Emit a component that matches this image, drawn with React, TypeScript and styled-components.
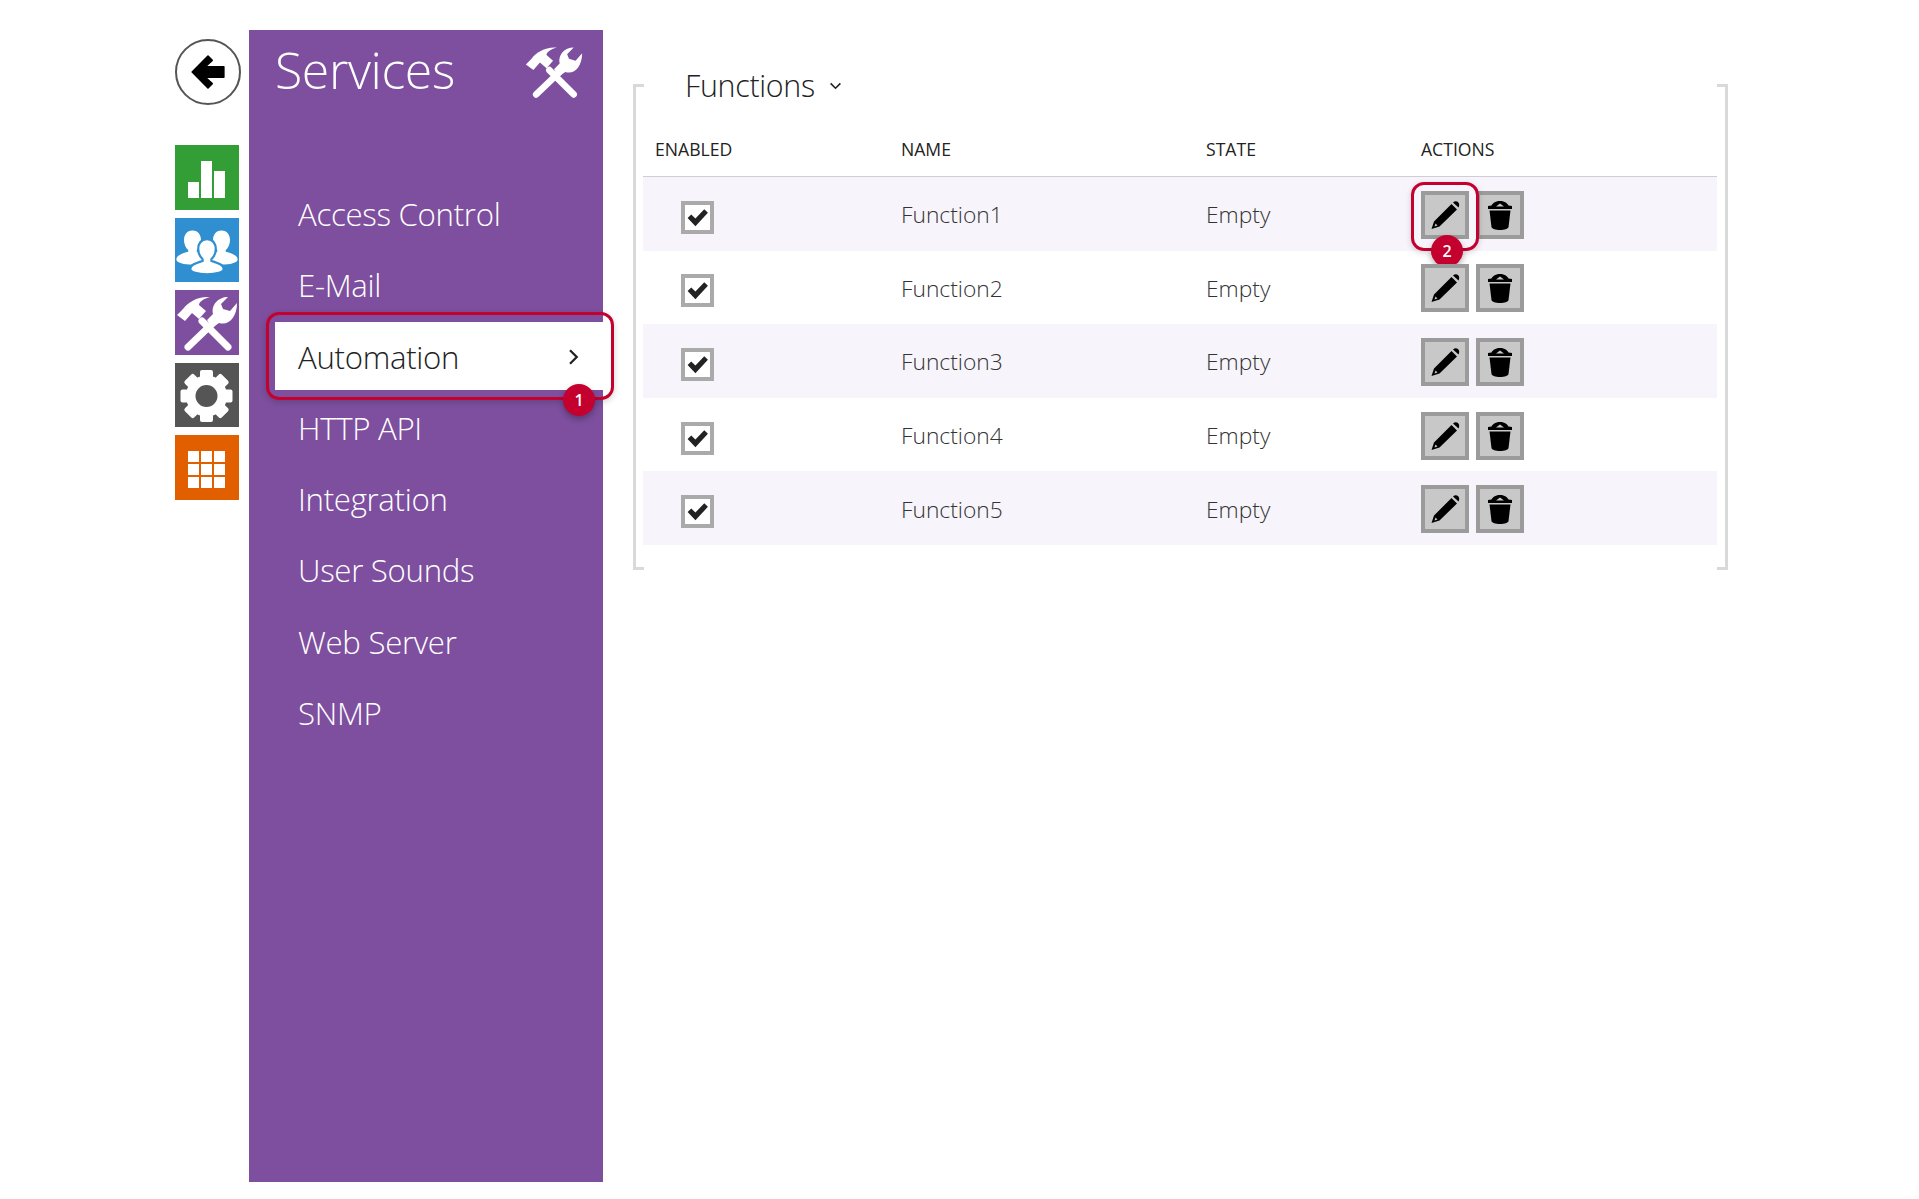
import React from 'react';
import styled, { createGlobalStyle } from 'styled-components';

const GlobalStyle = createGlobalStyle`
  html, body {
    margin: 0;
    padding: 0;
    background: #fff;
    font-family: "Open Sans", "Noto Sans", sans-serif;
    color: #333;
  }
`;

const RED = '#c4002f';

const Page = styled.div`
  display: flex;
  align-items: flex-start;
  height: 1199px;
  box-sizing: border-box;
  padding: 30px 0 0 175px;
  overflow: hidden;
`;

const Rail = styled.div`
  display: flex;
  flex-direction: column;
  width: 66px;
  margin-right: 8px;
`;

const BackButton = styled.button`
  width: 66px;
  height: 66px;
  margin: 9px 0 40px;
  padding: 0;
  border: 2.5px solid #555;
  border-radius: 50%;
  background: #fff;
  display: flex;
  align-items: center;
  justify-content: center;
`;

const Tiles = styled.div`
  display: flex;
  flex-direction: column;
  gap: 8px;
`;

const Tile = styled.div<{ $color: string }>`
  width: 64px;
  height: 64.5px;
  background: ${(p) => p.$color};
  display: flex;
  align-items: center;
  justify-content: center;
  svg {
    display: block;
  }
`;

const Panel = styled.aside`
  width: 354px;
  height: 1152px;
  flex: none;
  background: #7d4f9e;
  color: #fff;
`;

const PanelHeader = styled.header`
  display: flex;
  align-items: flex-start;
  justify-content: space-between;
  height: 149px;
  box-sizing: border-box;
  padding: 8px 19px 0 26px;
`;

const PanelTitle = styled.h1`
  margin: 0;
  font-size: 50px;
  line-height: 64px;
  font-weight: 300;
  letter-spacing: -0.4px;
`;

const HeaderIcon = styled.div`
  margin-top: 3px;
`;

const Nav = styled.nav`
  display: flex;
  flex-direction: column;
  gap: 3.3px;
`;

const NavItem = styled.a<{ $active?: boolean }>`
  position: relative;
  display: flex;
  align-items: center;
  justify-content: space-between;
  height: 68px;
  box-sizing: border-box;
  margin-left: 26px;
  padding: 2px 21px 0 23px;
  font-size: 31.2px;
  font-weight: 300;
  letter-spacing: -0.3px;
  color: ${(p) => (p.$active ? '#222' : '#fff')};
  background: ${(p) => (p.$active ? '#fff' : 'transparent')};
`;

const NavOutline = styled.span`
  position: absolute;
  top: -10px;
  left: -9px;
  right: -11px;
  bottom: -10px;
  border: 3px solid ${RED};
  border-radius: 13px;
  box-shadow: 0 2px 6px rgba(0, 0, 0, 0.18);
`;

const ActionOutline = styled.span`
  position: absolute;
  top: -9px;
  left: -10px;
  width: 68px;
  height: 69px;
  box-sizing: border-box;
  border: 3px solid ${RED};
  border-radius: 13px;
  box-shadow: 0 2px 6px rgba(0, 0, 0, 0.16);
`;

const Marker = styled.span<{ $right: number; $bottom: number }>`
  position: absolute;
  right: ${(p) => p.$right}px;
  bottom: ${(p) => p.$bottom}px;
  width: 32px;
  height: 32px;
  border-radius: 50%;
  background: ${RED};
  color: #fff;
  font-size: 16px;
  font-weight: 600;
  display: flex;
  align-items: center;
  justify-content: center;
  box-shadow: 0 3px 6px rgba(0, 0, 0, 0.3);
`;

const Section = styled.section`
  position: relative;
  flex: none;
  width: 1095px;
  height: 486px;
  margin: 54px 0 0 30px;
  box-sizing: border-box;
  padding: 0 11px 0 10px;

  &::before,
  &::after {
    content: '';
    position: absolute;
    top: 0;
    bottom: 0;
    width: 8px;
    border: 3px solid #d9d9d9;
  }
  &::before {
    left: 0;
    border-right: 0;
  }
  &::after {
    right: 0;
    border-left: 0;
  }
`;

const SectionTitle = styled.h2`
  display: flex;
  align-items: center;
  gap: 14px;
  height: 44px;
  margin: -21px 0 1px;
  padding-left: 42px;
  font-size: 30.4px;
  font-weight: 300;
  letter-spacing: -0.3px;
  color: #222;
`;

const HeadRow = styled.div`
  display: grid;
  grid-template-columns: 246px 305px 215px 1fr;
  align-items: end;
  height: 69px;
  box-sizing: border-box;
  padding: 0 0 15px 12px;
  border-bottom: 1px solid #cfced6;
  font-size: 17.6px;
  line-height: 24px;
  color: #222;
`;

const Row = styled.div`
  display: grid;
  grid-template-columns: 246px 305px 215px 1fr;
  align-items: center;
  height: 73.6px;
  padding-left: 12px;
  font-size: 22.8px;
  font-weight: 300;
  color: #333;
  &:nth-of-type(odd) {
    background: #f7f5fb;
  }
`;

const Cell = styled.span`
  margin-top: 2px;
`;

const CheckBox = styled.span`
  width: 33px;
  height: 33px;
  box-sizing: border-box;
  margin: 7px 0 0 26px;
  border: 4px solid #aaa;
  background: #fff;
  display: flex;
  align-items: center;
  justify-content: center;
`;

const Actions = styled.div`
  display: flex;
  gap: 7px;
  margin-top: 2px;
`;

const ActionCell = styled.div`
  position: relative;
`;

const IconButton = styled.button`
  width: 48px;
  height: 48px;
  padding: 0;
  box-sizing: border-box;
  border: 4px solid #9b9b9b;
  background: #c8c8c8;
  display: flex;
  align-items: center;
  justify-content: center;
`;

const ToolsIcon = ({ size = 64 }: { size?: number }) => (
  <svg width={size} height={size} viewBox="0 0 64 64" fill="#fff">
    <path d="M2 25 L8 19 C13 12 23 6 35 7 C28 9 24 12 24 15 L31 21 L24 29 L17 23 L10 31 Z" />
    <path d="M27 31 L53 57" stroke="#fff" strokeWidth="7" strokeLinecap="round" />
    <path d="M13 57 L37 34" stroke="#fff" strokeWidth="7" strokeLinecap="round" />
    <path d="M37 38 L44 33 C54 36 62 27 62 13 L55 21 L48 19 L46 14 L53 7 C43 7 36 15 38 24 L32 30 Z" />
  </svg>
);

const ChartIcon = () => (
  <svg width="64" height="64" viewBox="0 0 64 64" fill="#fff">
    <rect x="13" y="37" width="11" height="16" />
    <rect x="26" y="16" width="11" height="37" />
    <rect x="39" y="26" width="11" height="27" />
  </svg>
);

const Person = ({ x, y, s }: { x: number; y: number; s: number }) => (
  <path
    transform={`translate(${x} ${y}) scale(${s})`}
    d="M0 -17 C-7 -17 -10 -11 -10 -6 C-10 -1 -8 3 -5 6 L-5 8 C-12 10 -19 12 -19 17 C-19 21 -10 23 0 23 C10 23 19 21 19 17 C19 12 12 10 5 8 L5 6 C8 3 10 -1 10 -6 C10 -11 7 -17 0 -17 Z"
  />
);

const UsersIcon = () => (
  <svg width="64" height="64" viewBox="0 0 64 64" fill="#fff">
    <Person x={17.5} y={27} s={0.85} />
    <Person x={46.5} y={27} s={0.85} />
    <g stroke="#2f8fd0" strokeWidth="2.5">
      <Person x={32} y={36} s={0.88} />
    </g>
  </svg>
);

const GearIcon = () => (
  <svg width="64" height="64" viewBox="0 0 64 64">
    <g transform="translate(-0.5 1)">
      {[0, 45, 90, 135, 180, 225, 270, 315].map((a) => (
        <rect key={a} x="25.5" y="6" width="13" height="12" rx="2" fill="#fff" transform={`rotate(${a} 32 32)`} />
      ))}
      <circle cx="32" cy="32" r="15.75" fill="none" stroke="#fff" strokeWidth="9.5" />
    </g>
  </svg>
);

const GridIcon = () => (
  <svg width="64" height="64" viewBox="0 0 64 64" fill="#fff">
    {[13, 26, 39].map((x) =>
      [16, 29, 42].map((y) => <rect key={`${x}-${y}`} x={x} y={y} width="11" height="11" />),
    )}
  </svg>
);

const BackIcon = () => (
  <svg width="38" height="38" viewBox="0 0 36 36">
    <path d="M18 3 L3 18 L18 33 L22 29 L15.5 23 L33 23 L33 13 L15.5 13 L22 7 Z" stroke="#000" strokeWidth="1.5" strokeLinejoin="round" />
  </svg>
);

const Chevron = ({ dir, size }: { dir: 'right' | 'down'; size: number }) => (
  <svg width={size} height={size} viewBox="0 0 12 12" fill="none" stroke="#222" strokeWidth="1.5">
    <path d={dir === 'right' ? 'M4 1.5 L8.5 6 L4 10.5' : 'M1.5 4 L6 8.5 L10.5 4'} />
  </svg>
);

const CheckIcon = () => (
  <svg width="27" height="27" viewBox="0 0 24 24">
    <path d="M2.5 12.5 L6 9 L10 13 L18.5 4 L22 7.5 L10 20.5 Z" fill="#222" />
  </svg>
);

const PencilIcon = () => (
  <svg width="34" height="34" viewBox="0 0 34 34" fill="#000">
    <path d="M3.5 31 L6 23.5 L23.5 6 L29 11.5 L11.5 28.5 Z M7.5 25.5 L6.5 28.5 L9.5 27.5 Z" fillRule="evenodd" />
    <path d="M25 4.5 C26.5 3 28.5 2.8 30 4 C31.5 5.5 31.5 7.5 30.5 9.5 Z" />
  </svg>
);

const TrashIcon = () => (
  <svg width="30" height="34" viewBox="0 0 30 34" fill="#000">
    <path d="M15 3 C10 3 7.5 5.5 6.5 7.5 L3 8 L3 11 L27 11 L27 8 L23.5 7.5 C22.5 5.5 20 3 15 3 Z M15 5.5 L19 8.5 L11 8.5 Z" fillRule="evenodd" />
    <path d="M4.5 12.5 L25.5 12.5 L23.5 29 C23 31 19.5 32 15 32 C10.5 32 7 31 6.5 29 Z" />
  </svg>
);

const navItems = ['Access Control', 'E-Mail', 'Automation', 'HTTP API', 'Integration', 'User Sounds', 'Web Server', 'SNMP'];
const functions = ['Function1', 'Function2', 'Function3', 'Function4', 'Function5'];

export default function App() {
  return (
    <Page>
      <GlobalStyle />
      <Rail>
        <BackButton>
          <BackIcon />
        </BackButton>
        <Tiles>
          <Tile $color="#339e35"><ChartIcon /></Tile>
          <Tile $color="#2f8fd0"><UsersIcon /></Tile>
          <Tile $color="#7d4f9e"><ToolsIcon /></Tile>
          <Tile $color="#555555"><GearIcon /></Tile>
          <Tile $color="#e25f00"><GridIcon /></Tile>
        </Tiles>
      </Rail>
      <Panel>
        <PanelHeader>
          <PanelTitle>Services</PanelTitle>
          <HeaderIcon><ToolsIcon size={60} /></HeaderIcon>
        </PanelHeader>
        <Nav>
          {navItems.map((item) => (
            <NavItem key={item} $active={item === 'Automation'}>
              {item}
              {item === 'Automation' && (
                <>
                  <Chevron dir="right" size={18} />
                  <NavOutline />
                  <Marker $right={8} $bottom={-26}>1</Marker>
                </>
              )}
            </NavItem>
          ))}
        </Nav>
      </Panel>
      <Section>
        <SectionTitle>
          Functions
          <Chevron dir="down" size={13} />
        </SectionTitle>
        <HeadRow>
          <span>ENABLED</span>
          <span>NAME</span>
          <span>STATE</span>
          <span>ACTIONS</span>
        </HeadRow>
        <div>
          {functions.map((name, i) => (
            <Row key={name}>
              <CheckBox><CheckIcon /></CheckBox>
              <Cell>{name}</Cell>
              <Cell>Empty</Cell>
              <Actions>
                <ActionCell>
                  <IconButton><PencilIcon /></IconButton>
                  {i === 0 && (
                    <>
                      <ActionOutline />
                      <Marker $right={6} $bottom={-28}>2</Marker>
                    </>
                  )}
                </ActionCell>
                <IconButton><TrashIcon /></IconButton>
              </Actions>
            </Row>
          ))}
        </div>
      </Section>
    </Page>
  );
}
